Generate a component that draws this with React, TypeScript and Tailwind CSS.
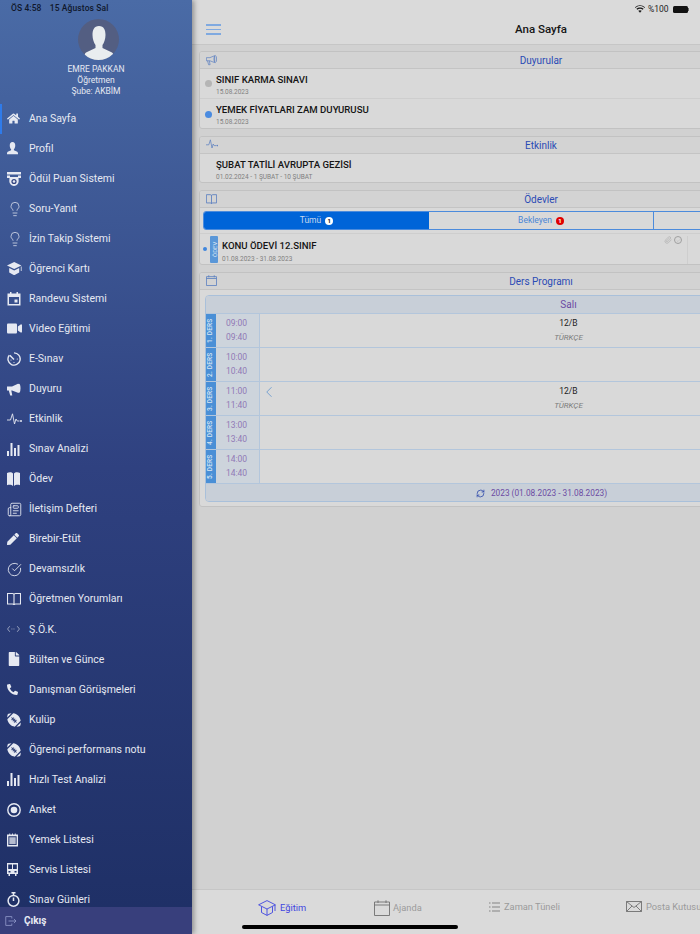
import type { ReactNode } from "react";
import { CircleCheckBig, Lightbulb, Newspaper, RefreshCw, ChevronLeft, Paperclip, Check } from "lucide-react";
import { FaFile, FaFootballBall, FaHome, FaPen, FaPhoneAlt, FaVideo } from "react-icons/fa";

const Bust = () => (
  <svg viewBox="0 0 12 14" className="h-[13px] w-[11px]" fill="currentColor">
    <path d="M6 0C4 0 3 1.600 3 3.600 3 5.400 3.700 7 4.500 7.800L4.400 9 .8 10.600C.2 10.900 0 11.500 0 12.500L0 13.200 12 13.200 12 12.500C12 11.500 11.800 10.900 11.200 10.600L7.600 9 7.500 7.800C8.300 7 9 5.400 9 3.600 9 1.600 8 0 6 0Z" />
  </svg>
);

const Award = () => (
  <svg viewBox="0 0 14 14" className="h-[14px] w-[14px]" fill="currentColor">
    <path d="M0 0H14V2.500H0ZM0 3.500H3V5H11V3.500H14V6H11.500C11.500 8 12 9 11.300 11 10.500 13 8.500 14 7 14 5.500 14 3.500 13 2.700 11 2 9 2.500 8 2.500 6H0Z" />
    <circle cx="7" cy="9.500" r="2.600" fill="#324480" />
    <circle cx="7" cy="9.500" r="1.300" />
  </svg>
);

const Cap = () => (
  <svg viewBox="0 0 15 13" className="h-[13px] w-[15px]" fill="currentColor">
    <path d="M7.200 0 14.400 3.500 7.200 7 0 3.500Z" />
    <path d="M2.200 6 7.200 8.400 12.200 6V10.500L7.700 13H6.700L2.200 10.500Z" />
    <path d="M13.800 4.500H14.600V9H13.800Z" />
  </svg>
);

const CalendarFill = () => (
  <svg viewBox="0 0 14 14" className="h-[14px] w-[14px]" fill="currentColor">
    <path d="M3 0H4.500V1.500H9.500V0H11V1.500H13.500V13.500H.5V1.500H3ZM2 5V12H12V5Z" />
    <rect x="7.500" y="7.500" width="3" height="3" />
  </svg>
);

const CalendarLine = () => (
  <svg viewBox="0 0 12 12" className="h-[11px] w-[11px]" fill="none" stroke="currentColor" strokeWidth="0.9">
    <path d="M.5 1.800H11.500V11.500H.5ZM.5 3.800H11.500M3 .3V2.500M9 .3V2.500" />
  </svg>
);

const ExamClock = () => (
  <svg viewBox="0 0 14 14" className="h-[14px] w-[14px]" fill="none" stroke="currentColor" strokeWidth="1.400">
    <path d="M7 .9A6.100 6.100 0 1 1 2.300 3.200" />
    <path d="M2.800 3.200 7 7.500" />
    <circle cx="4" cy="8" r=".6" fill="currentColor" stroke="none" />
    <circle cx="7" cy="10.500" r=".6" fill="currentColor" stroke="none" />
    <circle cx="10.300" cy="7" r=".6" fill="currentColor" stroke="none" />
  </svg>
);

const Megaphone = () => (
  <svg viewBox="0 0 14 13" className="h-[13px] w-[14px]" fill="currentColor">
    <path d="M0 3.500H5L11 .8V9.800L5 7.500H4.300L5.300 12.500H3.200L1.800 7.500H0Z" />
    <ellipse cx="11.800" cy="5.300" rx="1.700" ry="4.600" />
  </svg>
);

const MegaphoneLine = () => (
  <svg viewBox="0 0 14 13" className="h-[12px] w-[11px]" fill="none" stroke="currentColor" strokeWidth="0.9">
    <path d="M.5 3.500H5L11 1V9.800L5 7.500H.5ZM2 7.500 3.300 12.500H5.200L4.200 7.500" />
    <ellipse cx="11.800" cy="5.300" rx="1.700" ry="4.400" />
  </svg>
);

const Pulse = ({ className }: { className: string }) => (
  <svg viewBox="0 0 15 12" className={className} fill="none" stroke="currentColor" strokeWidth="0.9">
    <path d="M0 7H3.500L5.500 .8 7.500 11 9 6 10.200 8H12.500" />
    <circle cx="14" cy="8" r="1" fill="currentColor" stroke="none" />
  </svg>
);

const Bars = () => (
  <svg viewBox="0 0 13 13" className="h-[13px] w-[13px]" fill="currentColor">
    <rect x="0" y="8" width="2" height="5" />
    <rect x="3.500" y="0" width="2" height="13" />
    <rect x="7" y="5" width="2" height="8" />
    <rect x="10.500" y="2" width="2" height="11" />
  </svg>
);

const BookFill = () => (
  <svg viewBox="0 0 13 14" className="h-[14px] w-[13px]" fill="currentColor">
    <path d="M0 1C2 0 5 0 6 1.500V14C5 12.800 2 12.500 0 13.200ZM7 1.500C8 0 11 0 13 1V13.200C11 12.500 8 12.800 7 14Z" />
  </svg>
);

const BookLine = ({ className }: { className: string }) => (
  <svg viewBox="0 0 14 14" className={className} fill="none" stroke="currentColor" strokeWidth="1.100">
    <path d="M.5 1.500H5.500C6.400 1.500 7 2 7 2.800 7 2 7.600 1.500 8.500 1.500H13.500V12H8.500C7.600 12 7 12.500 7 13 7 12.500 6.400 12 5.500 12H.5ZM7 2.800V13" />
  </svg>
);

const CodeDots = () => (
  <svg viewBox="0 0 14 8" className="h-[8px] w-[13px] opacity-70" fill="none" stroke="currentColor" strokeWidth=".9">
    <path d="M3 1 .6 4 3 7M11 1 13.400 4 11 7" />
    <path d="M4.800 4H9.200" strokeDasharray="1 1.200" />
  </svg>
);

const Target = () => (
  <svg viewBox="0 0 14 14" className="h-[14px] w-[14px]" fill="none" stroke="currentColor" strokeWidth="1.400">
    <circle cx="7" cy="7" r="6.200" />
    <circle cx="7" cy="7" r="3.300" fill="currentColor" stroke="none" />
  </svg>
);

const Clipboard = () => (
  <svg viewBox="0 0 12 14" className="h-[14px] w-[11px]" fill="currentColor">
    <path d="M0 1H2.500V0H3.500V1H5.500V0H6.500V1H8.500V0H9.500V1H12V14H0ZM1.500 3V12.500H10.500V3Z" />
    <rect x="2.500" y="4" width="7" height="7.500" opacity=".75" />
  </svg>
);

const Bus = () => (
  <svg viewBox="0 0 11 13" className="h-[13px] w-[11px]" fill="currentColor">
    <path d="M0 0H11V11H9.500V13H8V11H3V13H1.500V11H0ZM1.200 1.500V6H5V1.500ZM6 1.500V6H9.800V1.500ZM1.500 8V9.500H3.500V8ZM7.500 8V9.500H9.500V8Z" fillRule="evenodd" />
  </svg>
);

const Stopwatch = () => (
  <svg viewBox="0 0 13 15" className="h-[15px] w-[13px]" fill="none" stroke="currentColor" strokeWidth="1.500">
    <circle cx="6.500" cy="8.800" r="5.400" />
    <path d="M4.500 .8H8.500M6.500 1V3.400M6.500 5.500V9" />
  </svg>
);

const ExitBox = ({ className }: { className: string }) => (
  <svg viewBox="0 0 14 12" className={className} fill="none" stroke="currentColor" strokeWidth="1">
    <path d="M8 3V.7H.7V11.300H8V9" />
    <path d="M4 6H13M10.500 3.500 13 6 10.500 8.500" />
  </svg>
);

const menu: { label: string; icon: ReactNode }[] = [
  { label: "Ana Sayfa", icon: <FaHome size={13} /> },
  { label: "Profil", icon: <Bust /> },
  { label: "Ödül Puan Sistemi", icon: <Award /> },
  { label: "Soru-Yanıt", icon: <Lightbulb size={16} strokeWidth={1.100} /> },
  { label: "İzin Takip Sistemi", icon: <Lightbulb size={16} strokeWidth={1.100} /> },
  { label: "Öğrenci Kartı", icon: <Cap /> },
  { label: "Randevu Sistemi", icon: <CalendarFill /> },
  { label: "Video Eğitimi", icon: <FaVideo size={15} /> },
  { label: "E-Sınav", icon: <ExamClock /> },
  { label: "Duyuru", icon: <Megaphone /> },
  { label: "Etkinlik", icon: <Pulse className="h-[12px] w-[15px]" /> },
  { label: "Sınav Analizi", icon: <Bars /> },
  { label: "Ödev", icon: <BookFill /> },
  { label: "İletişim Defteri", icon: <Newspaper size={15} strokeWidth={1.400} /> },
  { label: "Birebir-Etüt", icon: <FaPen size={12} /> },
  { label: "Devamsızlık", icon: <CircleCheckBig size={15} strokeWidth={1.400} /> },
  { label: "Öğretmen Yorumları", icon: <BookLine className="h-[14px] w-[14px]" /> },
  { label: "Ş.Ö.K.", icon: <CodeDots /> },
  { label: "Bülten ve Günce", icon: <FaFile size={14} /> },
  { label: "Danışman Görüşmeleri", icon: <FaPhoneAlt size={11} /> },
  { label: "Kulüp", icon: <FaFootballBall size={14} className="-scale-x-100" /> },
  { label: "Öğrenci performans notu", icon: <FaFootballBall size={14} className="-scale-x-100" /> },
  { label: "Hızlı Test Analizi", icon: <Bars /> },
  { label: "Anket", icon: <Target /> },
  { label: "Yemek Listesi", icon: <Clipboard /> },
  { label: "Servis Listesi", icon: <Bus /> },
  { label: "Sınav Günleri", icon: <Stopwatch /> },
];

const lessons = [
  { no: "1. DERS", start: "09:00", end: "09:40", cls: true },
  { no: "2. DERS", start: "10:00", end: "10:40", cls: false },
  { no: "3. DERS", start: "11:00", end: "11:40", cls: true, arrow: true },
  { no: "4. DERS", start: "13:00", end: "13:40", cls: false },
  { no: "5. DERS", start: "14:00", end: "14:40", cls: false },
];

const Sidebar = () => (
  <aside className="relative z-10 flex h-[934px] w-[192px] shrink-0 flex-col overflow-hidden bg-gradient-to-b from-[#4a6ba6] via-[#2f4180] to-[#1e2f65] text-[#e6e9f2] shadow-[2px_0_5px_rgba(0,0,0,0.35)]">
    <div className="h-[19px] pl-[11px] pt-[3px] text-[8.5px] font-medium leading-[11px] tracking-[0.1px] text-[#10182c]">
      ÖS 4:58 <span className="ml-[6px]">15 Ağustos Sal</span>
    </div>
    <div className="flex h-[84px] flex-col items-center">
      <div className="ml-[5px] flex h-[41px] w-[41px] items-end justify-center overflow-hidden rounded-full bg-[#535e82]">
        <svg viewBox="0 0 30 34" className="h-[34px] w-[30px]" fill="#e9edef">
          <path d="M15 0C10 0 8.500 4 8.500 9 8.500 13 10 17 11.500 19L11.500 22 2 26.500C.5 27.500 0 30 0 34H30C30 30 29.500 27.500 28 26.500L18.500 22 18.500 19C20 17 21.500 13 21.500 9 21.500 4 20 0 15 0Z" />
        </svg>
      </div>
      <p className="mt-[4px] text-[8.5px] leading-[11px]">EMRE PAKKAN</p>
      <p className="text-[8.5px] leading-[11px]">Öğretmen</p>
      <p className="text-[8.5px] leading-[11px]">Şube: AKBİM</p>
    </div>
    <ul className="min-h-0 flex-1 overflow-hidden pt-[0.6px]">
      {menu.map((item, i) => (
        <li
          key={item.label}
          className={`flex h-[30.06px] items-center border-l-2 pl-[5px] text-[10.5px] ${i === 0 ? "border-[#2f7bea]" : "border-transparent"}`}
        >
          <span className="flex w-[22px] shrink-0 items-center justify-start">{item.icon}</span>
          <span className="whitespace-nowrap">{item.label}</span>
        </li>
      ))}
    </ul>
    <div className="flex h-[27px] shrink-0 items-center gap-[7px] bg-[#383f7c] pl-[5px] text-[10px] font-bold">
      <ExitBox className="h-[10px] w-[12px] text-[#8f97c9]" />
      <span>Çıkış</span>
    </div>
  </aside>
);

const PanelHead = ({ title, icon }: { title: string; icon: ReactNode }) => (
  <div className="relative flex h-[17px] items-center justify-center border-b border-[#c4c4c4] bg-[#d3d3d3] text-[10px] text-[#2b4bb5]">
    <span className="absolute left-[6px] top-[2px] text-[#5b7fc0]">{icon}</span>
    {title}
  </div>
);

const Panel = ({ children, className }: { children: ReactNode; className: string }) => (
  <section className={`overflow-hidden rounded-[3px] border border-[#c2c2c2] bg-[#d9d9d9] ${className}`}>{children}</section>
);

const Notice = ({ title, date, dot }: { title: string; date: string; dot?: string }) => (
  <div className="flex h-[30px] items-center border-b border-[#cecece] last:border-b-0">
    <span className="flex w-[16px] shrink-0 justify-center pl-[1px]">
      {dot && <span className={`h-[7px] w-[7px] rounded-full ${dot}`} />}
    </span>
    <div className="pt-[2px]">
      <p className="text-[9.6px] font-medium leading-[12px] text-[#151515]">{title}</p>
      <p className="mt-[2px] text-[6.5px] leading-[8px] text-[#7f7f7f]">{date}</p>
    </div>
  </div>
);

const Schedule = () => (
  <div className="ml-[5px] mt-[5px] w-[673px] overflow-hidden rounded-[4px] border border-[#a9c0da] bg-[#d9d9d9]">
    <div className="flex h-[18px] items-center border-b border-[#b3c6dc] bg-[#c8cfd8] pl-[54px] text-[10px] text-[#6c4ba3]">
      <span className="flex-1 text-center">Salı</span>
    </div>
    {lessons.map((l) => (
      <div key={l.no} className="flex h-[34px] border-b border-[#b3c6dc]">
        <div className="flex w-[10px] rotate-180 items-center justify-center bg-[#4a8fd6] text-[6.5px] font-medium tracking-[0.2px] text-[#d9e6f3] [writing-mode:vertical-rl]">
          {l.no}
        </div>
        <div className="flex w-[44px] flex-col items-center justify-center gap-[3px] border-r border-[#b3c6dc] bg-[#cdd4dc] pr-[2px] text-[8.5px] leading-[11px] text-[#9179b6]">
          <span>{l.start}</span>
          <span>{l.end}</span>
        </div>
        <div className="relative flex flex-1 flex-col items-center justify-center gap-[3px]">
          {l.arrow && <ChevronLeft size={18} strokeWidth={1.200} className="absolute left-[0px] top-[1px] text-[#6d9ccf]" />}
          {l.cls && (
            <>
              <span className="text-[8.5px] leading-[11px] text-[#222222]">12/B</span>
              <span className="text-[8px] italic leading-[11px] text-[#7b7b7b]">TÜRKÇE</span>
            </>
          )}
        </div>
      </div>
    ))}
    <div className="flex h-[17px] items-center justify-center gap-[6px] bg-[#c8cfd8] pt-[1px] text-[8.3px] text-[#6c4ba3]">
      <RefreshCw size={9} strokeWidth={2} className="text-[#2440a8]" />
      2023 (01.08.2023 - 31.08.2023)
    </div>
  </div>
);

const BottomBar = () => (
  <footer className="relative flex h-[45px] shrink-0 items-start border-t border-[#c6c6c6] bg-[#dadada] pl-[66px] pt-[10px] text-[9.3px] text-[#9b9b9b]">
    <div className="flex w-[116px] items-center gap-[4px] text-[#3f46e0]">
      <svg viewBox="0 0 18 16" className="h-[16px] w-[18px]" fill="none" stroke="currentColor" strokeWidth="0.9">
        <path d="M9 .6 17.400 4.800 9 9 .6 4.800ZM3.500 6.500V12.500L9 15.400 14.500 12.500V6.500M9 9V15.400M17 5V11" />
      </svg>
      Eğitim
    </div>
    <div className="flex w-[115px] items-center gap-[3px]">
      <svg viewBox="0 0 16 16" className="h-[16px] w-[16px]" fill="none" stroke="#6f6f6f" strokeWidth="0.9">
        <path d="M.5 2H15.500V15.500H.5ZM.5 5H15.500M4 .3V3M12 .3V3" />
      </svg>
      Ajanda
    </div>
    <div className="flex w-[137px] items-center gap-[4px]">
      <svg viewBox="0 0 11 10" className="h-[10px] w-[11px]" fill="none" stroke="#7a7a7a" strokeWidth="0.9">
        <path d="M3 1H11M3 5H11M3 9H11M0 1H1.500M0 5H1.500M0 9H1.500" />
      </svg>
      Zaman Tüneli
    </div>
    <div className="flex items-center gap-[4px] whitespace-nowrap">
      <svg viewBox="0 0 16 11" className="h-[11px] w-[16px]" fill="none" stroke="#6f6f6f" strokeWidth="0.9">
        <path d="M.5.5H15.500V10.500H.5ZM.5.5 8 6.500 15.500.5M.5 10.500 6 5M15.500 10.500 10 5" />
      </svg>
      Posta Kutusu
    </div>
  </footer>
);

export default function App() {
  return (
    <div className="relative flex h-[934px] w-[700px] overflow-hidden bg-[#d1d1d1] font-['Roboto',sans-serif]">
      <Sidebar />
      <main className="flex h-[934px] w-[698px] shrink-0 flex-col">
        <header className="h-[45px] shrink-0 border-b border-[#c6c6c6] bg-[#dadada]">
          <div className="flex h-[17px] w-[508px] items-center justify-end gap-[3px] pr-[11px] pt-[1px] text-[8.500px] text-[#222222]">
            <svg viewBox="0 0 12 9" className="h-[8px] w-[10px]" fill="#1a1a1a">
              <path d="M6 9 3.900 6.700C5.100 5.700 6.900 5.700 8.100 6.700ZM2.800 5.500 1.600 4.200C4.100 2 7.900 2 10.400 4.200L9.200 5.500C7.400 3.900 4.600 3.900 2.800 5.500ZM.7 3.200 0 2.500C3.400-.8 8.600-.8 12 2.500L11.300 3.200C8.300.3 3.700.3.700 3.200Z" />
            </svg>
            <span>%100</span>
            <span className="ml-[1px] flex items-center">
              <span className="h-[7px] w-[15px] rounded-[1.5px] bg-[#111111]" />
              <span className="ml-[0.5px] h-[3px] w-[1px] bg-[#666666]" />
            </span>
          </div>
          <div className="relative flex h-[25px] items-center justify-center text-[11.500px] font-medium text-[#151515]">
            <span className="absolute left-[14px] top-[7px] flex w-[15px] flex-col gap-[3px]">
              <span className="h-[1.5px] bg-[#7fa9e0]" />
              <span className="h-[1.5px] bg-[#7fa9e0]" />
              <span className="h-[1.5px] bg-[#7fa9e0]" />
            </span>
            Ana Sayfa
          </div>
        </header>

        <div className="min-h-0 flex-1 pl-[7px] pr-[7px] pt-[6px]">
          <Panel className="h-[78px]">
            <PanelHead title="Duyurular" icon={<MegaphoneLine />} />
            <Notice title="SINIF KARMA SINAVI" date="15.08.2023" dot="bg-[#b5b5b5]" />
            <Notice title="YEMEK FİYATLARI ZAM DUYURUSU" date="15.08.2023" dot="bg-[#4a8be0]" />
          </Panel>

          <Panel className="mt-[7px] h-[47px]">
            <PanelHead title="Etkinlik" icon={<Pulse className="h-[10px] w-[12px]" />} />
            <Notice title="ŞUBAT TATİLİ AVRUPTA GEZİSİ" date="01.02.2024 - 1 ŞUBAT - 10 ŞUBAT" />
          </Panel>

          <Panel className="mt-[7px] h-[75px]">
            <PanelHead title="Ödevler" icon={<BookLine className="h-[12px] w-[11px]" />} />
            <div className="ml-[3px] mt-[3px] flex h-[19px] w-[676px] overflow-hidden rounded-[3px] border border-[#4c8bdc] text-[8.500px] text-[#4a86d6]">
              <div className="flex w-[225px] items-center justify-center gap-[4px] bg-[#0064d8] text-[#c6d8ef]">
                Tümü
                <span className="flex h-[8px] w-[8px] items-center justify-center rounded-full bg-white text-[6px] font-bold leading-none text-[#111111]">1</span>
              </div>
              <div className="flex w-[225px] items-center justify-center gap-[4px] border-r border-[#4c8bdc]">
                Bekleyen
                <span className="flex h-[8px] w-[8px] items-center justify-center rounded-full bg-[#e00000] text-[6px] font-bold leading-none text-white">1</span>
              </div>
              <div className="flex-1" />
            </div>
            <div className="mt-[3px] flex h-[31px] items-center border-t border-[#cecece]">
              <span className="ml-[3px] h-[4px] w-[4px] rounded-full bg-[#3f86dd]" />
              <span className="ml-[3px] flex h-[27px] w-[8px] rotate-180 items-center justify-center rounded-[1px] bg-[#5a97d8] text-[6px] text-[#d8e6f4] [writing-mode:vertical-rl]">ÖDEV</span>
              <div className="ml-[4px] flex-1 pt-[5px]">
                <p className="text-[9.6px] font-medium leading-[12px] text-[#151515]">KONU ÖDEVİ 12.SINIF</p>
                <p className="mt-[3px] text-[6.5px] leading-[9px] text-[#7f7f7f]">01.08.2023 -  31.08.2023</p>
              </div>
              <div className="flex h-full w-[219px] shrink-0 items-start gap-[2px] pt-[2px] text-[#a0a0a0]">
                <Paperclip size={8} strokeWidth={1.400} className="ml-[1px]" />
                <span className="flex h-[8px] w-[8px] items-center justify-center rounded-full border border-[#a0a0a0]">
                  <Check size={5} strokeWidth={1.500} />
                </span>
                <span className="ml-[3px] h-full w-px bg-[#cecece]" />
              </div>
            </div>
          </Panel>

          <Panel className="mt-[7px] h-[235px]">
            <PanelHead title="Ders Programı" icon={<CalendarLine />} />
            <Schedule />
          </Panel>
        </div>

        <BottomBar />
      </main>
      <div className="absolute bottom-[5px] left-[242px] h-[4px] w-[216px] rounded-full bg-black" />
    </div>
  );
}
